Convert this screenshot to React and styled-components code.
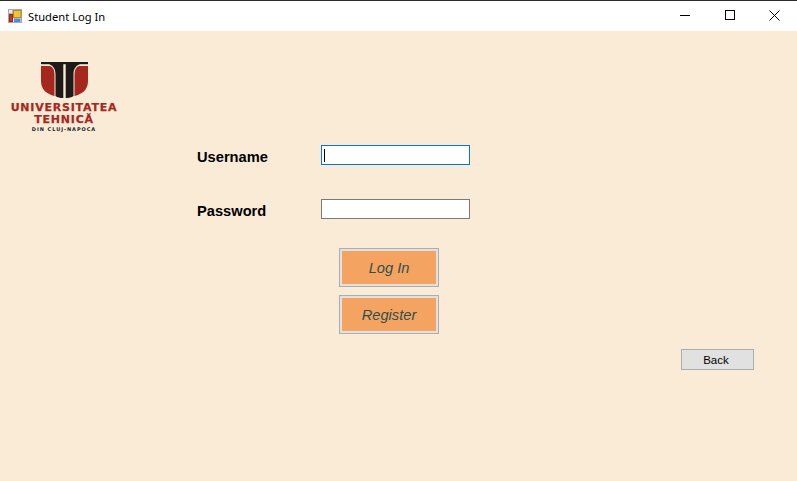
import React from 'react';
import styled, { createGlobalStyle } from 'styled-components';

const Global = createGlobalStyle`
  html, body { margin: 0; padding: 0; height: 100%; background: #faebd7; overflow: hidden; }
  #root { height: 100%; }
`;
const Win = styled.div`
  width: 797px; height: 481px; display: flex; flex-direction: column;
  font-family: "Liberation Sans", Arial, sans-serif; background: #faebd7;
`;
const TitleBar = styled.header`
  height: 30px; flex: none; background: #fff; border-top: 1px solid #2b2b2b;
  display: flex; align-items: center; padding-left: 8px;
`;
const AppIcon = styled.svg`width: 14px; height: 14px; margin-right: 6px; flex: none;`;
const Title = styled.span`
  font-family: "Noto Sans", "Open Sans", sans-serif; font-size: 11.2px; color: #000; flex: 1;
`;
const Caption = styled.button`
  width: 45px; height: 30px; border: 0; padding: 0 0 2px; background: transparent;
  display: flex; align-items: center; justify-content: center;
`;
const Body = styled.main`
  flex: 1; display: flex; position: relative;
`;
const Logo = styled.div`
  width: 108px; margin: 30px 0 0 10px; display: flex; flex-direction: column; align-items: center; flex: none;
`;
const Emblem = styled.svg`width: 48px; height: 38px; display: block; margin: 0 0 3px 1px;`;
const LogoLine = styled.div`
  font-family: "DejaVu Sans", sans-serif; font-weight: 700; font-size: 11px; line-height: 11.5px; color: #a5281f;
  letter-spacing: .78px; white-space: nowrap; -webkit-text-stroke: .25px #a5281f;
`;
const LogoSub = styled.div`
  font-family: "DejaVu Sans", sans-serif; font-size: 5px; line-height: 7px; letter-spacing: .95px;
  color: #222; white-space: nowrap; font-weight: 700; margin-top: 1px;
`;
const Center = styled.div`
  margin-left: 79px; padding-top: 114px; display: flex; flex-direction: column; width: 273px; flex: none;
`;
const Row = styled.div`
  display: flex; height: 20px; margin-bottom: ${p => p.$gap}px;
`;
const Label = styled.label`
  width: 124px; font-size: 14.67px; font-weight: 700; color: #000; line-height: 25px; height: 20px;
`;
const Input = styled.div`
  width: 149px; height: 20px; box-sizing: border-box; background: #fff;
  border: 1px solid ${p => p.$focus ? '#0078d7' : '#7a7a7a'};
  display: flex; align-items: center; padding-left: 2px;
`;
const Caret = styled.span`width: 1px; height: 13px; background: #000;`;
const Buttons = styled.div`
  display: flex; flex-direction: column; gap: 8px; margin-left: 142px;
`;
const BigButton = styled.button`
  width: 100px; height: 39px; box-sizing: border-box; padding: 0;
  background: #f4a460; border: 1px solid #adadad; box-shadow: inset 0 0 0 2px #e1e1e1;
  font: italic 14.67px "Liberation Sans", Arial, sans-serif; color: #2f4f4f;
`;
const BackButton = styled.button`
  position: absolute; left: 681px; top: 318px;
  width: 73px; height: 21px; box-sizing: border-box; padding: 0 3px 0 0;
  background: #e1e1e1; border: 1px solid #adadad;
  font: 11.5px "Liberation Sans", Arial, sans-serif; color: #000;
`;

export default function App() {
  return (
    <Win>
      <Global />
      <TitleBar>
        <AppIcon viewBox="0 0 14 14">
          <rect x="0.5" y="0.5" width="13" height="13" fill="#e9e9e9" stroke="#a8a8a8" />
          <path d="M4.500 0V14M0 4.500H5" stroke="#b5b5b5" fill="none" />
          <rect x="5.500" y="1.500" width="7.500" height="7" fill="#f2c13d" stroke="#b58a1e" />
          <rect x="1.500" y="5.500" width="3" height="7" fill="#d2342c" stroke="#8f2a24" />
          <rect x="6" y="9.500" width="6.500" height="3.500" fill="#4a90d9" />
        </AppIcon>
        <Title>Student Log In</Title>
        <Caption aria-label="Minimize">
          <svg width="10" height="10" viewBox="0 0 10 10"><path d="M0 5.500H10" stroke="#000" strokeWidth="1" /></svg>
        </Caption>
        <Caption aria-label="Maximize">
          <svg width="10" height="10" viewBox="0 0 10 10"><rect x=".5" y=".5" width="9" height="9" fill="none" stroke="#000" /></svg>
        </Caption>
        <Caption aria-label="Close">
          <svg width="11" height="11" viewBox="0 0 11 11"><path d="M.5 .5L10.500 10.500M10.500 .5L.5 10.500" stroke="#000" strokeWidth="1" /></svg>
        </Caption>
      </TitleBar>
      <Body>
        <Logo>
          <Emblem viewBox="0 0 48 38">
            <rect x="0" y="1" width="47" height="2.200" fill="#1e1a18" />
            <path d="M0 5H9C12 6 13.500 9 13.500 13V35C6 33 0 29 0 20Z" fill="#a5281f" />
            <path d="M47 5H38C35 6 33.500 9 33.500 13V35C41 33 47 29 47 20Z" fill="#a5281f" />
            <path d="M8 3H22.300V37C19 37 16.500 36.500 14.500 35V13C14.500 8 12 4.500 8 3Z" fill="#1e1a18" />
            <path d="M39 3H24.700V37C28 37 30.500 36.500 32.500 35V13C32.500 8 35 4.500 39 3Z" fill="#1e1a18" />
          </Emblem>
          <LogoLine>UNIVERSITATEA</LogoLine>
          <LogoLine>TEHNICĂ</LogoLine>
          <LogoSub>DIN CLUJ-NAPOCA</LogoSub>
        </Logo>
        <Center>
          <Row $gap={34}>
            <Label>Username</Label>
            <Input $focus><Caret /></Input>
          </Row>
          <Row $gap={29}>
            <Label>Password</Label>
            <Input />
          </Row>
          <Buttons>
            <BigButton>Log In</BigButton>
            <BigButton>Register</BigButton>
          </Buttons>
        </Center>
        <BackButton>Back</BackButton>
      </Body>
    </Win>
  );
}
